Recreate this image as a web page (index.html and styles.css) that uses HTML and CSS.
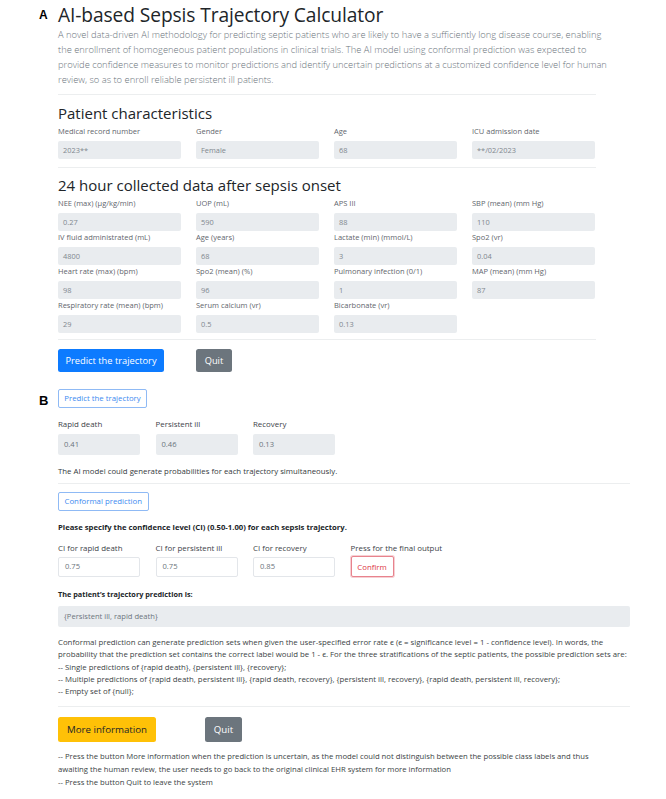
FILE: index.html
```html
<!DOCTYPE html>
<html lang="en">
<head>
<meta charset="utf-8">
<title>AI-based Sepsis Trajectory Calculator</title>
<link rel="stylesheet" href="styles.css">
</head>
<body>
<section class="panel panel-a">
  <div class="panel-letter letter-a">A</div>
  <div class="panel-body body-a">
    <h1 class="title">AI-based Sepsis Trajectory Calculator</h1>
    <p class="lead">A novel data-driven AI methodology for predicting septic patients who are likely to have a sufficiently long disease course, enabling<br>the enrollment of homogeneous patient populations in clinical trials. The AI model using conformal prediction was expected to<br>provide confidence measures to monitor predictions and identify uncertain predictions at a customized confidence level for human<br>review, so as to enroll reliable persistent ill patients.</p>
    <hr class="rule rule-a1">
    <h2 class="section-title">Patient characteristics</h2>
    <div class="grid-a">
      <div class="field"><label class="label-a">Medical record number</label><div class="input-a">2023**</div></div>
      <div class="field"><label class="label-a">Gender</label><div class="input-a">Female</div></div>
      <div class="field"><label class="label-a">Age</label><div class="input-a">68</div></div>
      <div class="field"><label class="label-a">ICU admission date</label><div class="input-a">**/02/2023</div></div>
    </div>
    <hr class="rule rule-a2">
    <h2 class="section-title title-24">24 hour collected data after sepsis onset</h2>
    <div class="grid-a">
      <div class="field"><label class="label-a">NEE (max) (μg/kg/min)</label><div class="input-a">0.27</div></div>
      <div class="field"><label class="label-a">UOP (mL)</label><div class="input-a">590</div></div>
      <div class="field"><label class="label-a">APS III</label><div class="input-a">88</div></div>
      <div class="field"><label class="label-a">SBP (mean) (mm Hg)</label><div class="input-a">110</div></div>
      <div class="field"><label class="label-a">IV fluid administrated (mL)</label><div class="input-a">4800</div></div>
      <div class="field"><label class="label-a">Age (years)</label><div class="input-a">68</div></div>
      <div class="field"><label class="label-a">Lactate (min) (mmol/L)</label><div class="input-a">3</div></div>
      <div class="field"><label class="label-a">Spo2 (vr)</label><div class="input-a">0.04</div></div>
      <div class="field"><label class="label-a">Heart rate (max) (bpm)</label><div class="input-a">98</div></div>
      <div class="field"><label class="label-a">Spo2 (mean) (%)</label><div class="input-a">96</div></div>
      <div class="field"><label class="label-a">Pulmonary infection (0/1)</label><div class="input-a">1</div></div>
      <div class="field"><label class="label-a">MAP (mean) (mm Hg)</label><div class="input-a">87</div></div>
      <div class="field"><label class="label-a">Respiratory rate (mean) (bpm)</label><div class="input-a">29</div></div>
      <div class="field"><label class="label-a">Serum calcium (vr)</label><div class="input-a">0.5</div></div>
      <div class="field"><label class="label-a">Bicarbonate (vr)</label><div class="input-a">0.13</div></div>
    </div>
    <hr class="rule rule-a3">
    <div class="btn-row-a">
      <button class="btn-a btn-primary">Predict the trajectory</button>
      <button class="btn-a btn-secondary btn-quit-a">Quit</button>
    </div>
  </div>
</section>

<section class="panel panel-b">
  <div class="panel-letter letter-b">B</div>
  <div class="panel-body body-b">
    <button class="btn-outline btn-outline-primary">Predict the trajectory</button>
    <div class="grid-b grid-prob">
      <div class="field"><label class="label-b">Rapid death</label><div class="input-b">0.41</div></div>
      <div class="field"><label class="label-b">Persistent ill</label><div class="input-b">0.46</div></div>
      <div class="field"><label class="label-b">Recovery</label><div class="input-b">0.13</div></div>
    </div>
    <p class="note">The AI model could generate probabilities for each trajectory simultaneously.</p>
    <hr class="rule rule-b1">
    <button class="btn-outline btn-outline-primary btn-conformal">Conformal prediction</button>
    <p class="bold-line spec">Please specify the confidence level (CI) (0.50-1.00) for each sepsis trajectory.</p>
    <div class="grid-b grid-ci">
      <div class="field"><label class="label-b">CI for rapid death</label><div class="input-b input-white">0.75</div></div>
      <div class="field"><label class="label-b">CI for persistent ill</label><div class="input-b input-white">0.75</div></div>
      <div class="field"><label class="label-b">CI for recovery</label><div class="input-b input-white">0.85</div></div>
      <div class="field"><label class="label-b">Press for the final output</label><button class="btn-outline btn-outline-danger">Confirm</button></div>
    </div>
    <p class="bold-line result-title">The patient’s trajectory prediction is:</p>
    <div class="input-b input-wide">{Persistent ill, rapid death}</div>
    <p class="explain">Conformal prediction can generate prediction sets when given the user-specified error rate ϵ (ϵ = significance level = 1 - confidence level). In words, the<br>probability that the prediction set contains the correct label would be 1 - ϵ. For the three stratifications of the septic patients, the possible prediction sets are:<br>-- Single predictions of {rapid death}, {persistent ill}, {recovery};<br>-- Multiple predictions of {rapid death, persistent ill}, {rapid death, recovery}, {persistent ill, recovery}, {rapid death, persistent ill, recovery};<br>-- Empty set of {null};</p>
    <hr class="rule rule-b2">
    <div class="btn-row-b">
      <button class="btn-lg btn-warning">More information</button>
      <button class="btn-lg btn-secondary btn-quit-b">Quit</button>
    </div>
    <p class="footer-note">-- Press the button More information when the prediction is uncertain, as the model could not distinguish between the possible class labels and thus<br>awaiting the human review, the user needs to go back to the original clinical EHR system for more information<br>-- Press the button Quit to leave the system</p>
  </div>
</section>
</body>
</html>
```
FILE: styles.css
```css
* { box-sizing: border-box; }
html, body { margin: 0; padding: 0; background: #ffffff; }
body {
  font-family: "Open Sans", "Noto Sans", "DejaVu Sans", sans-serif;
  color: #212529;
  width: 666px;
  height: 799px;
  overflow: hidden;
}
p, h1, h2 { margin: 0; }
button { font-family: inherit; cursor: pointer; }

.panel { display: flex; }
.panel-letter {
  width: 58px;
  padding-left: 39px;
  font-family: "Liberation Sans", Arial, sans-serif;
  font-weight: 700;
  color: #000;
}
.letter-a { font-size: 12px; line-height: 12px; padding-top: 9px; }
.letter-b { font-size: 13px; line-height: 13px; padding-top: 5px; }
.panel-body { display: flex; flex-direction: column; align-items: flex-start; }
.body-a { width: 538px; }
.body-b { width: 572px; }

/* ---------- Panel A ---------- */
.title {
  font-size: 19.2px;
  font-weight: 400;
  line-height: 22px;
  margin-top: 4px;
  color: #212529;
  letter-spacing: -0.1px;
}
.lead {
  font-size: 9.35px;
  line-height: 15.3px;
  color: #6c757d;
  margin-top: 0.5px;
  font-weight: 300;
  white-space: nowrap;
}
.rule {
  align-self: stretch;
  border: 0;
  border-top: 1px solid #eceeef;
  margin: 0;
}
.rule-a1 { margin-top: 6px; }
.section-title {
  font-size: 15px;
  font-weight: 500;
  line-height: 18px;
  margin-top: 9px;
  color: #212529;
}
.title-24 { margin-top: 8px; }
.rule-a2 { margin-top: 8px; }
.grid-a {
  display: grid;
  grid-template-columns: repeat(4, 123px);
  column-gap: 15px;
  margin-top: 3px;
  align-self: stretch;
}
.title-24 + .grid-a { margin-top: 3px; }
.field { display: flex; flex-direction: column; align-items: flex-start; }
.label-a {
  font-size: 7.5px;
  line-height: 12px;
  color: #5f666d;
  margin-bottom: 4px;
  white-space: nowrap;
}
.input-a {
  width: 123px;
  height: 18px;
  background: #e9ecef;
  border-radius: 2px;
  font-size: 7.4px;
  line-height: 18px;
  padding-left: 5px;
  color: #80878e;
}
.rule-a3 { margin-top: 6px; }
.btn-row-a { display: flex; gap: 32px; margin-top: 9px; }
.btn-a {
  height: 23px;
  border: 0;
  border-radius: 2.5px;
  font-size: 9.3px;
  color: #fff;
  padding: 0;
}
.btn-primary { background: #0d7bff; width: 106px; }
.btn-secondary { background: #6c757d; color: #fff; }
.btn-quit-a { width: 36px; }

/* ---------- Panel B ---------- */
.panel-b { margin-top: 17px; }
.btn-outline {
  height: 19.5px;
  border-radius: 2px;
  background: #fff;
  font-size: 7.8px;
  padding: 0;
}
.btn-outline-primary {
  border: 1px solid #8fbaf5;
  color: #3d8af0;
  width: 89px;
}
.grid-b {
  display: grid;
  grid-template-columns: repeat(4, 82px);
  column-gap: 15.5px;
  align-self: stretch;
}
.grid-prob { margin-top: 11px; }
.label-b {
  font-size: 7.9px;
  line-height: 10px;
  color: #3d4349;
  margin-bottom: 5px;
  white-space: nowrap;
}
.input-b {
  width: 82px;
  height: 20.5px;
  background: #e9ecef;
  border-radius: 2px;
  font-size: 7.6px;
  line-height: 20.5px;
  padding-left: 6px;
  color: #6c757d;
}
.note {
  font-size: 7.8px;
  line-height: 12px;
  color: #343a40;
  margin-top: 10px;
}
.rule-b1 { margin-top: 6px; }
.btn-conformal { margin-top: 8px; width: 90.5px; }
.bold-line {
  font-size: 7.3px;
  line-height: 12px;
  font-weight: 700;
  color: #212529;
}
.spec { margin-top: 10px; font-size: 7.7px; }
.grid-ci { margin-top: 10px; }
.grid-ci .label-b { margin-bottom: 4px; }
.input-white {
  background: #fff;
  border: 1px solid #e3e6ea;
  height: 19.5px;
  line-height: 17.5px;
}
.btn-outline-danger {
  border: 1.5px solid #e8838d;
  color: #dc3545;
  width: 43px;
  height: 21px;
  margin-top: -1px;
  padding: 0;
  box-shadow: 0 0 0 1px #f6d0d4;
}
.result-title { margin-top: 11px; }
.input-wide {
  width: 572px;
  margin-top: 6px;
  height: 21px;
  line-height: 21px;
}
.explain {
  font-size: 7.8px;
  line-height: 12.25px;
  color: #3a3f44;
  margin-top: 9px;
  white-space: nowrap;
}
.rule-b2 { margin-top: 9px; }
.btn-row-b { display: flex; gap: 49px; margin-top: 9.5px; }
.btn-lg {
  height: 25px;
  border: 0;
  border-radius: 2.5px;
  font-size: 9.7px;
  padding: 0;
}
.btn-warning { background: #ffc107; color: #212529; width: 98px; }
.btn-quit-b { width: 37px; }
.footer-note {
  font-size: 7.7px;
  line-height: 13px;
  color: #3a3f44;
  margin-top: 8.5px;
  white-space: nowrap;
}
```
